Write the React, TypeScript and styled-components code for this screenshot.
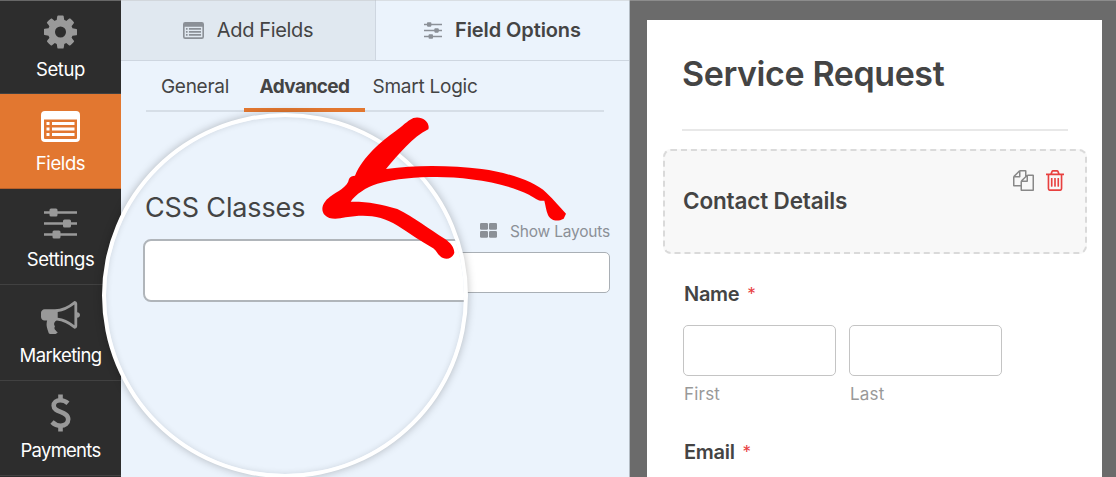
import type { ReactNode } from 'react';
import styled, { createGlobalStyle } from 'styled-components';

const GlobalStyle = createGlobalStyle`
	* {
		box-sizing: border-box;
	}
	body {
		margin: 0;
		overflow: hidden;
		font-family: Inter, 'Liberation Sans', sans-serif;
		color: #444;
	}
	svg {
		display: block;
	}
`;

const Builder = styled.div`
	position: relative;
	display: flex;
	width: 1116px;
	height: 477px;
	overflow: hidden;
	background-color: #6b6b6b;
`;

/* hairline along the top edge of the builder */
const TopEdge = styled.div`
	position: absolute;
	top: 0;
	left: 0;
	width: 100%;
	height: 1px;
	background-color: rgba(190, 190, 190, 0.4);
`;

const Sidebar = styled.nav`
	display: flex;
	flex-direction: column;
	flex: none;
	width: 121px;
	background-color: #2d2d2d;
`;

const SidebarItem = styled.div<{ $height: number; $active?: boolean }>`
	display: flex;
	flex-direction: column;
	align-items: center;
	justify-content: center;
	gap: 8px;
	flex: none;
	height: ${(props) => props.$height}px;
	padding-top: 2px;
	border-bottom: 1px solid ${(props) => (props.$active ? '#b8602a' : '#414141')};
	background-color: ${(props) => (props.$active ? '#e27730' : '#2d2d2d')};
	color: ${(props) => (props.$active ? '#fff' : '#999')};
`;

const SidebarIcon = styled.div<{ $shift?: number }>`
	display: flex;
	align-items: center;
	justify-content: center;
	height: 34px;
	padding-top: ${(props) => props.$shift ?? 0}px;
`;

const SidebarLabel = styled.span<{ $spacing: number }>`
	font-size: 18.5px;
	line-height: 24px;
	letter-spacing: ${(props) => props.$spacing}px;
	color: #fff;
`;

const Panel = styled.section`
	display: flex;
	flex-direction: column;
	flex: none;
	width: 509px;
	border-right: 1px solid #b4bcc4;
	background-color: #ebf3fc;
`;

const PanelTabs = styled.div`
	display: flex;
	height: 61px;
	border-bottom: 1px solid #ced6e0;
`;

const PanelTab = styled.div<{ $width: number; $active?: boolean }>`
	display: flex;
	align-items: center;
	justify-content: center;
	gap: 13px;
	width: ${(props) => props.$width}px;
	border-right: ${(props) => (props.$active ? 'none' : '1px solid #ced6e0')};
	background-color: ${(props) => (props.$active ? '#ebf3fc' : '#e0e8f0')};
	font-size: 20px;
	font-weight: ${(props) => (props.$active ? 600 : 400)};
	letter-spacing: ${(props) => (props.$active ? -0.1 : -0.35)}px;
	line-height: 24px;
	color: #444;

	svg {
		color: #8b9097;
	}
`;

const SubTabs = styled.div`
	display: flex;
	width: 458px;
	height: 51px;
	margin-left: 25px;
	border-bottom: 2px solid #d6dee7;
`;

const SubTab = styled.div<{ $width: number; $active?: boolean }>`
	width: ${(props) => props.$width}px;
	height: 51px;
	padding-top: 14px;
	border-bottom: ${(props) => (props.$active ? '4px solid #e27730' : 'none')};
	font-size: 19px;
	font-weight: ${(props) => (props.$active ? 700 : 400)};
	letter-spacing: ${(props) => (props.$active ? -0.55 : -0.25)}px;
	line-height: 24px;
	text-align: center;
	white-space: nowrap;
`;

const OptionRow = styled.div`
	display: flex;
	flex-direction: column;
	align-items: flex-end;
	padding: 107px 19px 0 25px;
`;

const LayoutsToggle = styled.div`
	display: flex;
	align-items: center;
	gap: 13px;
	height: 24px;
	font-size: 15.5px;
	letter-spacing: -0.2px;
	color: #8b9097;

	svg {
		margin-top: -2px;
	}
`;

const ClassInput = styled.div`
	width: 100%;
	height: 41px;
	margin-top: 9px;
	border: 1px solid #a9afb5;
	border-radius: 5px;
	background-color: #fff;
`;

/* magnifying lens over the option panel */
const Lens = styled.div`
	position: absolute;
	top: 113px;
	left: 102px;
	width: 366px;
	height: 365px;
	padding: 74px 0 0 37px;
	overflow: hidden;
	border: 4px solid #fff;
	border-radius: 50%;
	background-color: #ebf3fc;
	box-shadow:
		0 0 8px rgba(0, 0, 0, 0.25),
		inset 0 0 6px rgba(0, 0, 0, 0.12);
`;

const LensLabel = styled.div`
	padding-left: 2px;
	font-size: 27px;
	letter-spacing: -0.15px;
	line-height: 34px;
	color: #444;
`;

const LensInput = styled.div`
	width: 400px;
	height: 63px;
	margin-top: 14px;
	border: 2px solid #b0b5ba;
	border-radius: 8px;
	background-color: #fff;
`;

const Arrow = styled.svg`
	position: absolute;
	top: 105px;
	left: 300px;
	fill: #fe0000;
`;

const Preview = styled.main`
	flex: 1;
	padding: 20px 14px 0 17px;
	background-color: #6b6b6b;
`;

const FormCard = styled.div`
	display: flex;
	flex-direction: column;
	height: 457px;
	padding: 0 15px 0 16px;
	background-color: #fff;
`;

const FormTitle = styled.h1`
	width: 386px;
	height: 111px;
	margin: 0 0 0 19px;
	padding-top: 34px;
	border-bottom: 2px solid #e8e8e8;
	font-size: 34px;
	font-weight: 600;
	letter-spacing: -0.4px;
	line-height: 40px;
	color: #444;
`;

const SectionBox = styled.div`
	display: flex;
	justify-content: space-between;
	height: 105px;
	margin-top: 18px;
	padding: 0 21px 0 18px;
	border: 2px dashed #dadada;
	border-radius: 8px;
	background-color: #f8f8f8;
`;

const SectionTitle = styled.h2`
	margin: 36px 0 0;
	font-size: 22.5px;
	font-weight: 600;
	letter-spacing: -0.15px;
	line-height: 28px;
	color: #444;
`;

const SectionActions = styled.div`
	display: flex;
	gap: 12px;
	padding-top: 19px;
	color: #888;
`;

const FieldLabel = styled.div<{ $top: number }>`
	display: flex;
	gap: 8px;
	margin: ${(props) => props.$top}px 0 0 21px;
	font-size: 20px;
	font-weight: 600;
	letter-spacing: -0.3px;
	line-height: 24px;
	color: #444;
`;

const Required = styled.span`
	font-size: 17px;
	font-weight: 400;
	color: #e8403f;
`;

const NameFields = styled.div`
	display: flex;
	gap: 13px;
	margin: 19px 0 0 20px;
`;

const NameInput = styled.div`
	width: 153px;
	height: 51px;
	border: 1px solid #c4c4c4;
	border-radius: 5px;
	background-color: #fff;
`;

const SubLabel = styled.div`
	margin-top: 6px;
	padding-left: 1px;
	font-size: 17px;
	letter-spacing: 0.2px;
	line-height: 24px;
	color: #999;
`;

const GearIcon = () => (
	<svg width="33" height="34" viewBox="0 128 1536 1536" fill="currentColor">
		<path d="M1024 896q0-106-75-181t-181-75-181 75-75 181 75 181 181 75 181-75 75-181zm512-109v222q0 12-8 23t-20 13l-185 28q-19 54-39 91 35 50 107 138 10 12 10 25t-9 23q-27 37-99 108t-94 71q-12 0-26-9l-138-108q-44 23-91 38-16 136-29 186-7 28-36 28h-222q-14 0-24.5-8.5t-11.5-21.5l-28-184q-49-16-90-37l-141 107q-10 9-25 9-14 0-25-11-126-114-165-168-7-10-7-23 0-12 8-23 15-21 51-66.5t54-70.5q-27-50-41-99l-183-27q-13-2-21-12.5t-8-23.5v-222q0-12 8-23t19-13l186-28q14-46 39-92-40-57-107-138-10-12-10-24 0-10 9-23 26-36 98.5-107.5t94.5-71.5q13 0 26 10l138 107q44-23 91-38 16-136 29-186 7-28 36-28h222q14 0 24.5 8.5t11.5 21.5l28 184q49 16 90 37l142-107q9-9 24-9 13 0 25 10 129 119 165 170 7 8 7 22 0 12-8 23-15 21-51 66.5t-54 70.5q26 50 41 98l183 28q13 2 21 12.5t8 23.5z" />
	</svg>
);

const ListIcon = ({ width, height }: { width: number; height: number }) => (
	<svg width={width} height={height} viewBox="0 0 39 31" preserveAspectRatio="none" fill="currentColor">
		<path
			fillRule="evenodd"
			d="M4 0h31a4 4 0 0 1 4 4v23a4 4 0 0 1-4 4H4a4 4 0 0 1-4-4V4a4 4 0 0 1 4-4zM3 8.5V27a1 1 0 0 0 1 1h31a1 1 0 0 0 1-1V8.5z"
		/>
		<path d="M5.5 11h3v3h-3zM5.5 16.5h3v3h-3zM5.5 22h3v3h-3zM11 11h22.5v3H11zM11 16.5h22.5v3H11zM11 22h22.5v3H11z" />
	</svg>
);

const SlidersIcon = ({ width, height }: { width: number; height: number }) => (
	<svg width={width} height={height} viewBox="0 0 33 31" preserveAspectRatio="none" fill="currentColor">
		<path d="M0 3.2h33v2.6H0zM0 14.2h33v2.6H0zM0 25.2h33v2.6H0z" />
		<rect x="5.5" y="0.5" width="8" height="8" rx="1.5" />
		<rect x="19" y="11.5" width="8" height="8" rx="1.5" />
		<rect x="8.5" y="22.5" width="8" height="8" rx="1.5" />
	</svg>
);

const BullhornIcon = () => (
	<svg width="39" height="33" viewBox="0 128 1792 1517" fill="currentColor">
		<path d="M1664 640q53 0 90.5 37.5t37.5 90.5-37.5 90.5-90.5 37.5v384q0 52-38 90t-90 38q-417-347-812-380-58 19-91 66t-31 100.5 40 92.5q-20 33-23 65.5t6 58 33.5 55 48 50 61.5 50.5q-29 58-111.5 83t-168.5 11.5-132-55.5q-7-23-29.5-87.5t-32-94.5-23-89-15-101 3.5-98.5 22-110.5h-122q-66 0-113-47t-47-113v-192q0-66 47-113t113-47h480q435 0 896-384 52 0 90 38t38 90v384zm-128 604v-954q-394 302-768 343v270q377 42 768 341z" />
	</svg>
);

const DollarIcon = () => (
	<svg width="21" height="38" viewBox="0 0 21 38" fill="none" stroke="currentColor" strokeWidth="4.6">
		<path d="M10.5 0.5V7M10.5 31V37.5" />
		<path d="M18 9.3C15.5 7.2 13 6.3 10.3 6.3C6.3 6.3 3.7 8.5 3.7 11.8C3.7 19 18.2 17 18.2 25.3C18.2 29.2 15 31.7 10.7 31.7C7.5 31.7 4.5 30.5 2 28" />
	</svg>
);

const GridIcon = () => (
	<svg width="17" height="15" viewBox="0 0 17 15" fill="currentColor">
		<rect width="8" height="6.8" rx="1.3" />
		<rect x="9" width="8" height="6.8" rx="1.3" />
		<rect y="8" width="8" height="6.8" rx="1.3" />
		<rect x="9" y="8" width="8" height="6.8" rx="1.3" />
	</svg>
);

const CopyIcon = () => (
	<svg width="21" height="21" viewBox="0 0 1792 1792" fill="currentColor">
		<path d="M1696 384q40 0 68 28t28 68v1216q0 40-28 68t-68 28h-960q-40 0-68-28t-28-68v-288h-544q-40 0-68-28t-28-68v-672q0-40 20-88t48-76l408-408q28-28 76-48t88-20h416q40 0 68 28t28 68v328q68-40 128-40h416zm-544 213l-299 299h299v-299zm-640-384l-299 299h299v-299zm196 647l316-316v-416h-384v416q0 40-28 68t-68 28h-416v640h512v-256q0-40 20-88t48-76zm956 804v-1152h-384v416q0 40-28 68t-68 28h-416v640h896z" />
	</svg>
);

const TrashIcon = () => (
	<svg width="18" height="21" viewBox="192 128 1408 1536" preserveAspectRatio="none" fill="#e8403f">
		<path d="M704 736v576q0 14-9 23t-23 9h-64q-14 0-23-9t-9-23v-576q0-14 9-23t23-9h64q14 0 23 9t9 23zm256 0v576q0 14-9 23t-23 9h-64q-14 0-23-9t-9-23v-576q0-14 9-23t23-9h64q14 0 23 9t9 23zm256 0v576q0 14-9 23t-23 9h-64q-14 0-23-9t-9-23v-576q0-14 9-23t23-9h64q14 0 23 9t9 23zm128 724v-948h-896v948q0 22 7 40.5t14.5 27 10.5 8.5h832q3 0 10.5-8.5t14.5-27 7-40.5zm-672-1076h448l-48-117q-7-9-17-11h-317q-10 2-17 11zm928 32v64q0 14-9 23t-23 9h-96v948q0 83-47 143.5t-113 60.5h-832q-66 0-113-58.5t-47-141.5v-952h-96q-14 0-23-9t-9-23v-64q0-14 9-23t23-9h309l70-167q15-37 54-63t79-26h320q40 0 79 26t54 63l70 167h309q14 0 23 9t9 23z" />
	</svg>
);

interface MenuItem {
	label: string;
	height: number;
	spacing: number;
	icon: ReactNode;
	shift?: number;
	active?: boolean;
}

const menu: MenuItem[] = [
	{ label: 'Setup', height: 94, spacing: -0.4, icon: <GearIcon /> },
	{ label: 'Fields', height: 95, spacing: -0.4, icon: <ListIcon width={39} height={31} />, active: true },
	{ label: 'Settings', height: 96, spacing: -0.4, icon: <SlidersIcon width={33} height={31} />, shift: 4 },
	{ label: 'Marketing', height: 96, spacing: -0.65, icon: <BullhornIcon /> },
	{ label: 'Payments', height: 95, spacing: -0.75, icon: <DollarIcon /> },
];

const App = () => {
	return (
		<Builder>
			<GlobalStyle />
			<Sidebar>
				{menu.map((item) => (
					<SidebarItem key={item.label} $height={item.height} $active={item.active}>
						<SidebarIcon $shift={item.shift}>{item.icon}</SidebarIcon>
						<SidebarLabel $spacing={item.spacing}>{item.label}</SidebarLabel>
					</SidebarItem>
				))}
			</Sidebar>
			<Panel>
				<PanelTabs>
					<PanelTab $width={255}>
						<ListIcon width={21} height={17} />
						Add Fields
					</PanelTab>
					<PanelTab $width={253} $active>
						<SlidersIcon width={18} height={17} />
						Field Options
					</PanelTab>
				</PanelTabs>
				<SubTabs>
					<SubTab $width={98}>General</SubTab>
					<SubTab $width={121} $active>
						Advanced
					</SubTab>
					<SubTab $width={120}>Smart Logic</SubTab>
				</SubTabs>
				<OptionRow>
					<LayoutsToggle>
						<GridIcon />
						Show Layouts
					</LayoutsToggle>
					<ClassInput />
				</OptionRow>
			</Panel>
			<Preview>
				<FormCard>
					<FormTitle>Service Request</FormTitle>
					<SectionBox>
						<SectionTitle>Contact Details</SectionTitle>
						<SectionActions>
							<CopyIcon />
							<TrashIcon />
						</SectionActions>
					</SectionBox>
					<FieldLabel $top={28}>
						Name <Required>*</Required>
					</FieldLabel>
					<NameFields>
						<div>
							<NameInput />
							<SubLabel>First</SubLabel>
						</div>
						<div>
							<NameInput />
							<SubLabel>Last</SubLabel>
						</div>
					</NameFields>
					<FieldLabel $top={34}>
						Email <Required>*</Required>
					</FieldLabel>
				</FormCard>
			</Preview>
			<Lens>
				<LensLabel>CSS Classes</LensLabel>
				<LensInput />
			</Lens>
			<Arrow width="330" height="210" viewBox="0 0 990 630">
				<path d="M340 39C363 31 392 50 385 73C338 96 296 148 258 192C350 179 455 181 545 192C625 203 704 229 739 263C763 286 780 306 798 326L791 341C770 353 751 345 744 330C738 316 737 302 733 287C716 290 706 280 687 269C610 231 492 216 410 216C350 216 287 221 232 236C198 246 166 269 152 290C200 289 245 297 292 312C343 337 386 372 434 401C452 413 463 427 463 443C457 464 433 466 420 453C409 442 408 434 397 428C361 408 330 385 293 362C244 331 195 327 137 337C112 343 87 344 75 331C60 315 67 292 90 275C112 259 143 247 147 222C150 214 158 212 165 212C188 156 245 108 287 78C306 65 322 47 340 39Z" />
			</Arrow>
			<TopEdge />
		</Builder>
	);
};

export default App;
